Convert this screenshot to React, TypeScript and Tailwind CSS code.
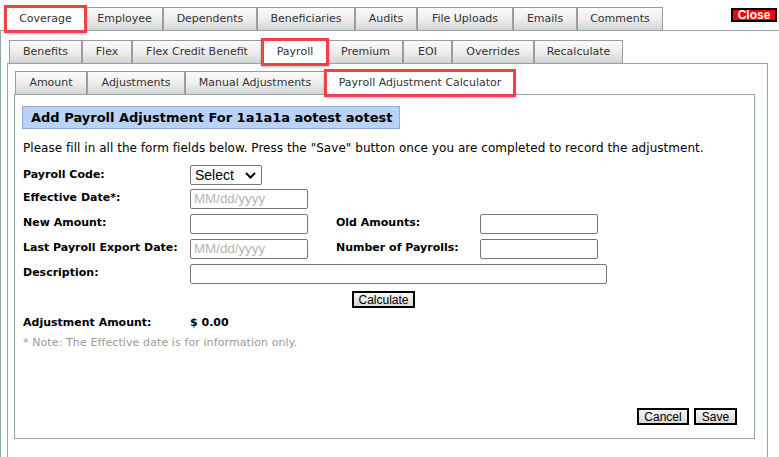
import React from "react";

type TabProps = { label: string; w: string; active?: boolean; hl?: boolean };

function Tab({ label, w, active, hl }: TabProps) {
  return (
    <div
      className={`relative h-[23px] ${w} shrink-0 flex items-center justify-center border border-b-0 border-[#9b9b9b] text-[11px] text-[#333] ${
        active
          ? "bg-white h-[24px] -mb-px z-10"
          : "bg-gradient-to-b from-[#fbfbfb] via-[#eeeeee] to-[#d3d3d3]"
      }`}
    >
      <span className={active ? "pb-px" : ""}>{label}</span>
      {hl && (
        <span className="pointer-events-none absolute -left-[2px] -right-[2px] -top-[3px] -bottom-[2px] border-[3px] border-[#ec4248] shadow-[0_1px_2px_rgba(0,0,0,0.25)]" />
      )}
    </div>
  );
}

function Btn({ label, w }: { label: string; w: string }) {
  return (
    <button
      className={`h-[17px] ${w} border-2 border-black bg-gradient-to-b from-[#f6f6f6] to-[#d9d9d9] text-[12px] leading-none text-black font-['Liberation_Sans',Arial,sans-serif] flex items-center justify-center`}
    >
      {label}
    </button>
  );
}

function Input({ w, ph }: { w: string; ph?: string }) {
  return (
    <div
      className={`h-[20px] ${w} border border-[#767676] rounded-[2px] bg-white flex items-center px-[3px] text-[13.33px] text-[#b5b5b5] font-['Liberation_Sans',Arial,sans-serif]`}
    >
      {ph}
    </div>
  );
}

export default function App() {
  return (
    <div className="w-[779px] h-[457px] overflow-hidden bg-white font-['DejaVu_Sans',Verdana,sans-serif] text-[11px] text-black">
      {/* Level 1 tabs */}
      <div className="flex items-end pl-[5px] pt-[7px] h-[30px] relative">
        <Tab label="Coverage" w="w-[81px]" active hl />
        <Tab label="Employee" w="w-[77px]" />
        <Tab label="Dependents" w="w-[94px]" />
        <Tab label="Beneficiaries" w="w-[98px]" />
        <Tab label="Audits" w="w-[62px]" />
        <Tab label="File Uploads" w="w-[96px]" />
        <Tab label="Emails" w="w-[64px]" />
        <Tab label="Comments" w="w-[86px]" />
        <div className="ml-auto mr-[2px] self-start mt-[1px] h-[14px] w-[46px] shrink-0 bg-[#ff0000] border-2 border-black flex items-center justify-center text-white font-bold text-[12px] leading-none font-['Liberation_Sans',Arial,sans-serif]">
          Close
        </div>
      </div>

      {/* Level 1 panel */}
      <div className="border-l border-t border-[#8fa6b1] w-[800px] h-[430px] pl-[6px] pt-[9px]">
        {/* Level 2 tabs */}
        <div className="flex items-end pl-[2px] h-[23px]">
          <Tab label="Benefits" w="w-[73px]" />
          <Tab label="Flex" w="w-[50px]" />
          <Tab label="Flex Credit Benefit" w="w-[130px]" />
          <Tab label="Payroll" w="w-[66px]" active hl />
          <Tab label="Premium" w="w-[75px]" />
          <Tab label="EOI" w="w-[49px]" />
          <Tab label="Overrides" w="w-[82px]" />
          <Tab label="Recalculate" w="w-[89px]" />
        </div>

        {/* Level 2 panel */}
        <div className="border-l border-t border-r border-[#8fa6b1] w-[761px] h-[420px] pl-[6px] pt-[7px]">
          {/* Level 3 tabs */}
          <div className="flex items-end pl-[1px] h-[23px]">
            <Tab label="Amount" w="w-[72px]" />
            <Tab label="Adjustments" w="w-[98px]" />
            <Tab label="Manual Adjustments" w="w-[140px]" />
            <Tab label="Payroll Adjustment Calculator" w="w-[190px]" active hl />
          </div>

          {/* Level 3 panel */}
          <div className="border border-[#8fa6b1] w-[741px] h-[345px] pl-[7px] pt-[11px] relative">
            <div className="w-[378px] h-[23px] bg-[#b8d3f7] border border-[#8daed9] flex items-center pl-[8px] font-bold text-[13px]">
              Add Payroll Adjustment For 1a1a1a aotest aotest
            </div>

            <div className="mt-[12px] text-[12px] leading-[14px] pl-px tracking-[0.04px]">
              Please fill in all the form fields below. Press the "Save" button once you are completed to record the adjustment.
            </div>

            <div className="mt-[10px] pl-[1px] flex flex-col">
              {/* Payroll Code */}
              <div className="flex items-center h-[20px]">
                <div className="w-[167px] font-bold">Payroll Code:</div>
                <div className="h-[20px] w-[72px] border border-[#767676] rounded-[2px] bg-white flex items-center justify-between pl-[4px] pr-[5px] text-[14px] font-['Liberation_Sans',Arial,sans-serif]">
                  <span>Select</span>
                  <svg width="11" height="7" viewBox="0 0 11 7">
                    <path d="M1 1 L5.5 5.5 L10 1" fill="none" stroke="#000" strokeWidth="2" />
                  </svg>
                </div>
              </div>
              <div className="flex items-start h-[25px] mt-[4px]">
                <div className="w-[167px] font-bold pt-[1px]">Effective Date*:</div>
                <Input w="w-[118px]" ph="MM/dd/yyyy" />
              </div>
              <div className="flex items-start h-[25px]">
                <div className="w-[167px] font-bold pt-[1px]">New Amount:</div>
                <Input w="w-[118px]" />
                <div className="ml-[28px] w-[144px] font-bold pt-[1px]">Old Amounts:</div>
                <Input w="w-[118px]" />
              </div>
              <div className="flex items-start h-[25px]">
                <div className="w-[167px] font-bold pt-[1px]">Last Payroll Export Date:</div>
                <Input w="w-[118px]" ph="MM/dd/yyyy" />
                <div className="ml-[28px] w-[144px] font-bold pt-[1px]">Number of Payrolls:</div>
                <Input w="w-[118px]" />
              </div>
              <div className="flex items-start h-[25px]">
                <div className="w-[167px] font-bold pt-[1px]">Description:</div>
                <Input w="w-[417px]" />
              </div>
              <div className="flex h-[17px] mt-[2px] pl-[329px]">
                <Btn label="Calculate" w="w-[63px]" />
              </div>
              <div className="flex items-center mt-[8px] h-[14px]">
                <div className="w-[167px] font-bold">Adjustment Amount:</div>
                <div className="font-bold">$ 0.00</div>
              </div>
              <div className="mt-[5px] text-[#9a9a9a] tracking-[0.1px]">
                * Note: The Effective date is for information only.
              </div>
            </div>

            <div className="absolute right-[17px] bottom-[13px] flex gap-[5px]">
              <Btn label="Cancel" w="w-[52px]" />
              <Btn label="Save" w="w-[43px]" />
            </div>
          </div>
        </div>
      </div>
    </div>
  );
}
